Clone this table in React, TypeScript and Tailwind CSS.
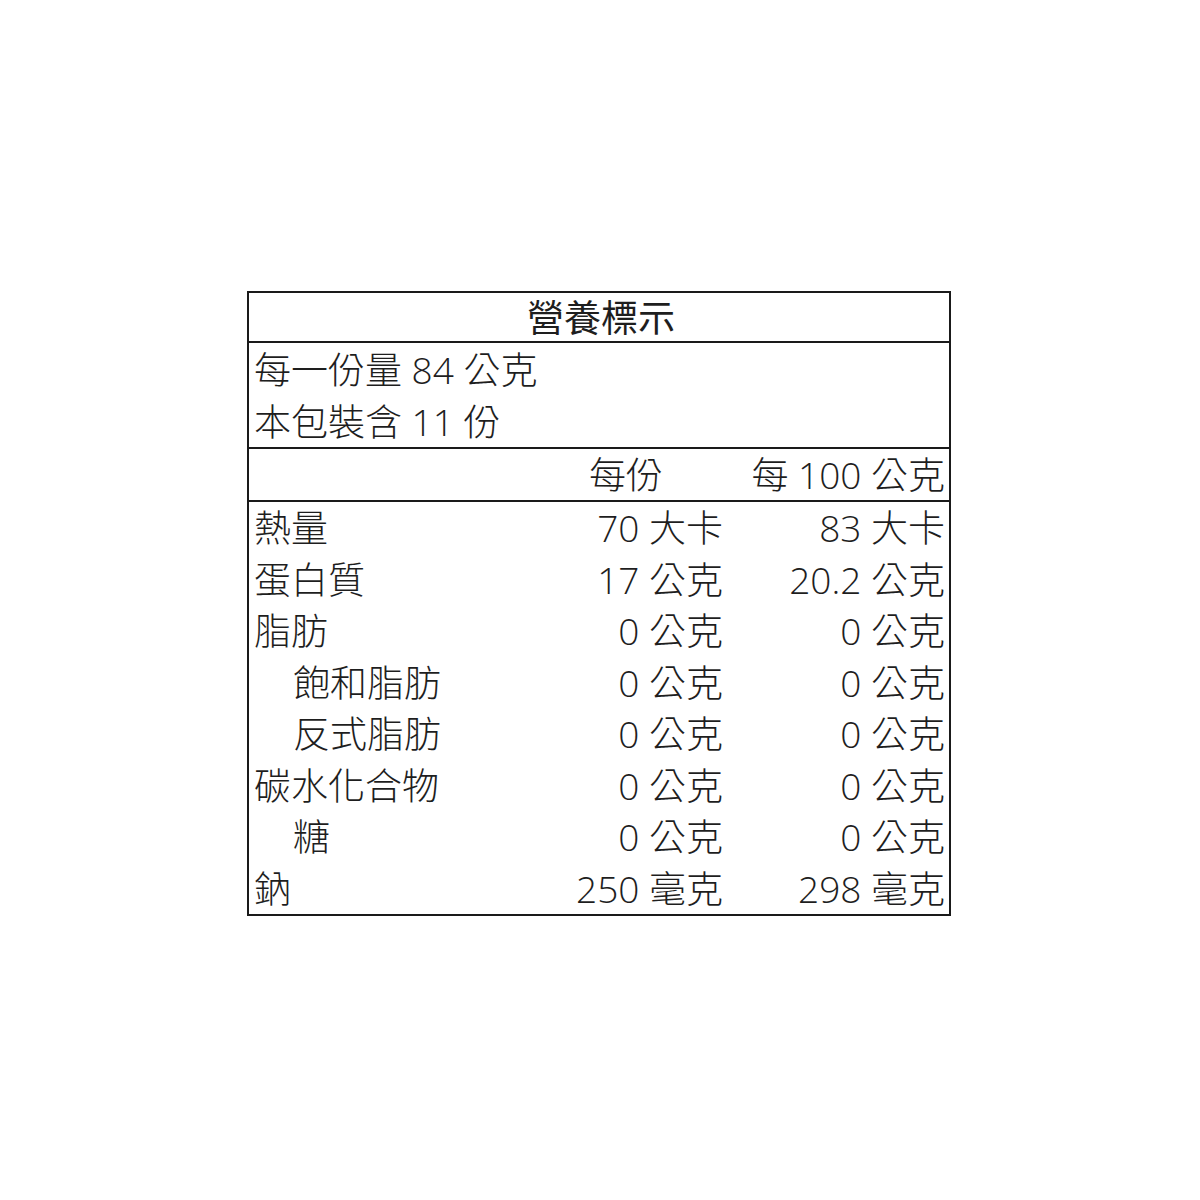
import React from "react";

const font = {
  fontFamily: '"Open Sans", "Noto Sans CJK TC", "Noto Sans CJK SC", sans-serif',
};

type Row = { name: string; indent?: boolean; a: string; b: string };

const rows: Row[] = [
  { name: "熱量", a: "70 大卡", b: "83 大卡" },
  { name: "蛋白質", a: "17 公克", b: "20.2 公克" },
  { name: "脂肪", a: "0 公克", b: "0 公克" },
  { name: "飽和脂肪", indent: true, a: "0 公克", b: "0 公克" },
  { name: "反式脂肪", indent: true, a: "0 公克", b: "0 公克" },
  { name: "碳水化合物", a: "0 公克", b: "0 公克" },
  { name: "糖", indent: true, a: "0 公克", b: "0 公克" },
  { name: "鈉", a: "250 毫克", b: "298 毫克" },
];

export default function App() {
  return (
    <div className="w-[1200px] h-[1200px] bg-white pl-[247px] pt-[291px]" style={font}>
      <div className="w-[704px] border-2 border-[#1a1a1a] text-[37px] font-light text-[#1e1e1e] leading-none">
        <div className="h-[50px] flex items-center justify-center border-b-2 border-[#1a1a1a] font-normal pl-[4px]">
          營養標示
        </div>
        <div className="border-b-2 border-[#1a1a1a] flex flex-col">
          <div className="h-[52px] flex items-center pl-[5px]">每一份量 84 公克</div>
          <div className="h-[52px] flex items-center pl-[5px]">本包裝含 11 份</div>
        </div>
        <div className="h-[53px] grid grid-cols-[259px_221px_220px] items-center border-b-2 border-[#1a1a1a]">
          <div />
          <div className="text-right pr-[66px]">每份</div>
          <div className="text-right pr-[4px]">每 100 公克</div>
        </div>
        <div className="flex flex-col">
          {rows.map((r, i) => (
            <div
              key={i}
              className="h-[51.5px] grid grid-cols-[259px_221px_220px] items-center"
            >
              <div className={r.indent ? "pl-[44px]" : "pl-[5px]"}>{r.name}</div>
              <div className="text-right pr-[6px]">{r.a}</div>
              <div className="text-right pr-[4px]">{r.b}</div>
            </div>
          ))}
        </div>
      </div>
    </div>
  );
}
